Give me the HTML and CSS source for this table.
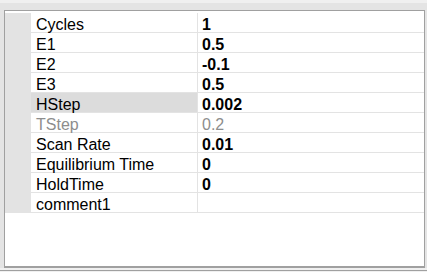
FILE: index.html
```html
<!DOCTYPE html>
<html>
<head>
    <title>Method Parameters</title>
    <link rel="stylesheet" href="styles.css">
</head>
<body>
    <div class="topbar"></div>
    <div class="panel">
        <div class="grid-frame">
            <div class="grid">
                <div class="row">
                    <div class="margin"></div>
                    <div class="name">Cycles</div>
                    <div class="value">1</div>
                </div>
                <div class="row">
                    <div class="margin"></div>
                    <div class="name">E1</div>
                    <div class="value">0.5</div>
                </div>
                <div class="row">
                    <div class="margin"></div>
                    <div class="name">E2</div>
                    <div class="value">-0.1</div>
                </div>
                <div class="row">
                    <div class="margin"></div>
                    <div class="name">E3</div>
                    <div class="value">0.5</div>
                </div>
                <div class="row selected">
                    <div class="margin"></div>
                    <div class="name">HStep</div>
                    <div class="value">0.002</div>
                </div>
                <div class="row readonly">
                    <div class="margin"></div>
                    <div class="name">TStep</div>
                    <div class="value">0.2</div>
                </div>
                <div class="row">
                    <div class="margin"></div>
                    <div class="name">Scan Rate</div>
                    <div class="value">0.01</div>
                </div>
                <div class="row">
                    <div class="margin"></div>
                    <div class="name">Equilibrium Time</div>
                    <div class="value">0</div>
                </div>
                <div class="row">
                    <div class="margin"></div>
                    <div class="name">HoldTime</div>
                    <div class="value">0</div>
                </div>
                <div class="row">
                    <div class="margin"></div>
                    <div class="name">comment1</div>
                    <div class="value"></div>
                </div>
            </div>
        </div>
    </div>
    <div class="bottombar"></div>
</body>
</html>
```

FILE: styles.css
```css
body {
    margin: 0;
    padding: 0;
    width: 427px;
    height: 272px;
    overflow: hidden;
    background-color: #f0f0f0;
    font-family: "Liberation Sans", Arial, sans-serif;
    font-size: 16px;
    color: #000;
}

.topbar {
    height: 3px;
    background-color: #f0f0f0;
}

.panel {
    background-color: #e4e4e4;
    padding: 7px 2px 0 4px; /* frame sits at x 4, y 10 */
}

.grid-frame {
    height: 253px;
    border: 1px solid #a0a0a0;
    border-bottom-width: 2px;
    background-color: #fff;
    padding-top: 2px;
}

.row {
    display: grid;
    grid-template-columns: 26px 167px 1fr;
    height: 20px;
}

.margin {
    background-color: #e3e3e3;
}

.name,
.value {
    box-sizing: border-box;
    height: 20px;
    padding-top: 5px;
    line-height: 14px;
    border-bottom: 1px solid #e3e3e3;
    white-space: nowrap;
}

.name {
    padding-left: 5px;
    border-right: 1px solid #e3e3e3;
}

.value {
    padding-left: 4px;
    font-weight: bold;
}

.selected .name {
    background-color: #dcdcdc;
}

.readonly .name,
.readonly .value {
    color: #8d8d8d;
    font-weight: normal;
}

.bottombar {
    height: 2px;
    background-color: #f0f0f0;
    border-bottom: 1px solid #a0a0a0;
}
```
